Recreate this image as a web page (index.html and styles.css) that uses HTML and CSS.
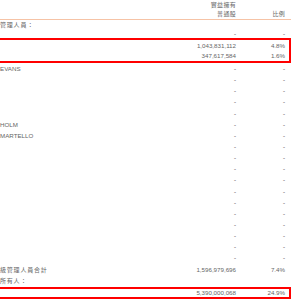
FILE: index.html
```html
<!DOCTYPE html>
<html lang="zh-Hant">
<head>
<meta charset="utf-8">
<link rel="stylesheet" href="styles.css">
</head>
<body>
<div class="sheet">
  <div class="row hdr1"><span class="lbl"></span><span class="num cjk-h">實益擁有</span><span class="pct"></span></div>
  <div class="row hdr2"><span class="lbl"></span><span class="num cjk-h">普通股</span><span class="pct cjk-h">比例</span></div>
  <div class="row sec"><span class="lbl cjk">管理人員：</span><span class="num"></span><span class="pct"></span></div>
  <div class="row dashrow"><span class="lbl"></span><span class="num dash">-</span><span class="pct dash">-</span></div>
  <div class="box top-box">
    <div class="row brow"><span class="lbl"></span><span class="num">1,043,831,112</span><span class="pct">4.8%</span></div>
    <div class="row brow"><span class="lbl"></span><span class="num">347,617,584</span><span class="pct">1.6%</span></div>
  </div>
  <div class="row std"><span class="lbl">EVANS</span><span class="num dash">-</span><span class="pct dash">-</span></div>
  <div class="row std"><span class="lbl"></span><span class="num dash">-</span><span class="pct dash">-</span></div>
  <div class="row std"><span class="lbl"></span><span class="num dash">-</span><span class="pct dash">-</span></div>
  <div class="row std"><span class="lbl"></span><span class="num dash">-</span><span class="pct dash">-</span></div>
  <div class="row std"><span class="lbl"></span><span class="num dash">-</span><span class="pct dash">-</span></div>
  <div class="row std"><span class="lbl">HOLM</span><span class="num dash">-</span><span class="pct dash">-</span></div>
  <div class="row std"><span class="lbl">MARTELLO</span><span class="num dash">-</span><span class="pct dash">-</span></div>
  <div class="row std"><span class="lbl"></span><span class="num dash">-</span><span class="pct dash">-</span></div>
  <div class="row std"><span class="lbl"></span><span class="num dash">-</span><span class="pct dash">-</span></div>
  <div class="row std"><span class="lbl"></span><span class="num dash">-</span><span class="pct dash">-</span></div>
  <div class="row std"><span class="lbl"></span><span class="num dash">-</span><span class="pct dash">-</span></div>
  <div class="row std"><span class="lbl"></span><span class="num dash">-</span><span class="pct dash">-</span></div>
  <div class="row std"><span class="lbl"></span><span class="num dash">-</span><span class="pct dash">-</span></div>
  <div class="row std"><span class="lbl"></span><span class="num dash">-</span><span class="pct dash">-</span></div>
  <div class="row std"><span class="lbl"></span><span class="num dash">-</span><span class="pct dash">-</span></div>
  <div class="row std"><span class="lbl"></span><span class="num dash">-</span><span class="pct dash">-</span></div>
  <div class="row std"><span class="lbl"></span><span class="num dash">-</span><span class="pct dash">-</span></div>
  <div class="row std"><span class="lbl"></span><span class="num dash">-</span><span class="pct dash">-</span></div>
  <div class="row std"><span class="lbl cjk">級管理人員合計</span><span class="num">1,596,979,696</span><span class="pct">7.4%</span></div>
  <div class="row own"><span class="lbl cjk">所有人：</span><span class="num"></span><span class="pct"></span></div>
  <div class="box bottom-box">
    <div class="row brow2"><span class="lbl"></span><span class="num">5,390,000,068</span><span class="pct">24.9%</span></div>
  </div>
</div>
</body>
</html>
```
FILE: styles.css
```css
html, body {
  margin: 0;
  padding: 0;
  background: #ffffff;
}

body {
  width: 300px;
  height: 300px;
  overflow: hidden;
  font-family: "Liberation Sans", "Noto Sans CJK TC", sans-serif;
  color: #666666;
}

.sheet {
  margin-left: -4px;
  width: 295px;
  display: flex;
  flex-direction: column;
}

.row {
  display: grid;
  grid-template-columns: 1fr 70px 49px;
  padding: 0 6px 0 4px;
  font-size: 6.2px;
  white-space: nowrap;
}

.num, .pct {
  text-align: right;
}

.dash {
  font-weight: 700;
  color: #8a8a8a;
}

.cjk, .cjk-h {
  font-family: "Noto Sans CJK TC", "Liberation Sans", sans-serif;
  font-size: 6px;
}

.cjk {
  letter-spacing: 0.8px;
}

.cjk-h {
  letter-spacing: 0.3px;
}

.hdr1 { height: 9px; line-height: 9px; }
.hdr2 {
  height: 10px;
  line-height: 10px;
  border-bottom: 1px solid #f6c3a6;
}
.sec { height: 10px; line-height: 10px; }
.dashrow { height: 7px; line-height: 7px; }

.box {
  border: 2px solid #ff0000;
}

.top-box {
  margin-top: 1px;
  padding-top: 1px;
}

.brow {
  height: 10px;
  line-height: 10px;
  padding: 0 4px 0 2px;
}

.std { height: 11.15px; line-height: 11.15px; }
.own { height: 12px; line-height: 12px; }

.brow2 {
  height: 8px;
  line-height: 8px;
  padding: 0 4px 0 2px;
}
```
